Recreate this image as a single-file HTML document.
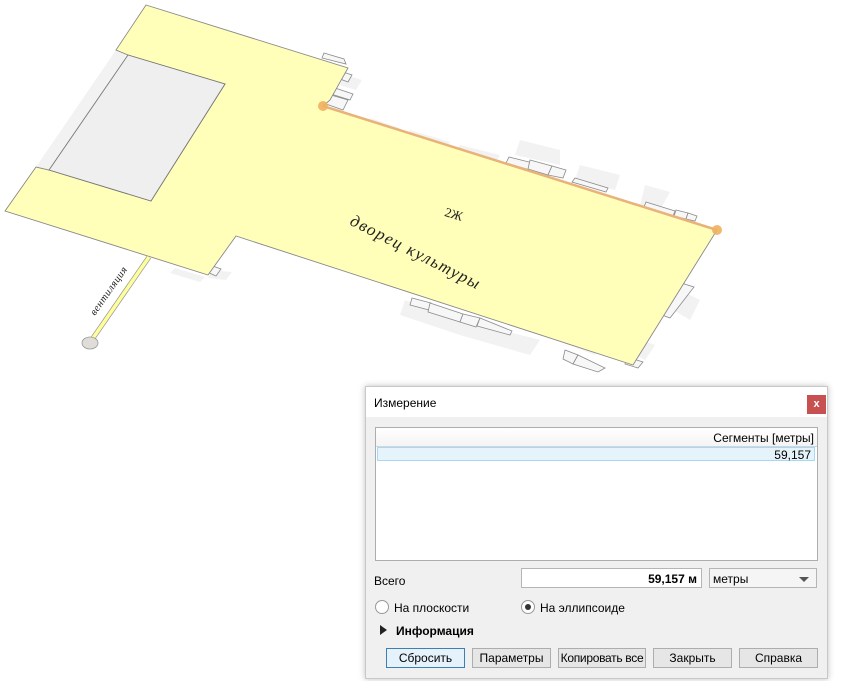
<!DOCTYPE html>
<html><head><meta charset="utf-8"><style>
html,body{margin:0;padding:0;width:842px;height:681px;overflow:hidden;background:#fff;font-family:"Liberation Sans",sans-serif;}
svg{position:absolute;left:0;top:0}
.dlg{position:absolute;left:365px;top:386px;width:461px;height:291px;background:#f0f0f0;border:1px solid #c8c8c8;box-shadow:0 0 6px rgba(0,0,0,.25);font-size:12px;color:#000}
.title{position:absolute;left:0;top:0;width:461px;height:30px;background:#fff}
.title span{position:absolute;left:8px;top:9px;font-size:12px}
.close{position:absolute;left:441px;top:8px;width:19px;height:19px;background:#c75050;color:#fff;font-weight:bold;font-size:11px;text-align:center;line-height:18px}
.tbl{position:absolute;left:9px;top:40px;width:441px;height:132px;background:#fff;border:1px solid #adadad}
.th{position:absolute;left:0;top:0;width:441px;height:18px;border-bottom:1px solid #d5d5d5;background:linear-gradient(#fff,#f4f4f4);text-align:right}
.th span{position:absolute;right:3px;top:3px}
.row{position:absolute;left:1px;top:19px;width:438px;height:14px;background:#e5f3fb;border:1px solid #a8d8f4;text-align:right;box-sizing:border-box}
.row span{position:absolute;right:3px;top:0px}
.lbl{position:absolute;white-space:nowrap}
.inp{position:absolute;left:155px;top:181px;width:181px;height:20px;background:#fff;border:1px solid #b5b5b5;font-weight:bold;text-align:right;box-sizing:border-box;padding:3px 4px 0 0}
.combo{position:absolute;left:343px;top:181px;width:108px;height:20px;background:#f5f5f5;border:1px solid #b5b5b5;box-sizing:border-box;padding:3px 0 0 3px}
.combo i{position:absolute;right:7px;top:8px;border-left:5px solid transparent;border-right:5px solid transparent;border-top:5px solid #555}
.rad{position:absolute;width:12px;height:12px;border:1px solid #999;border-radius:50%;background:#fff}
.rad.on::after{content:"";position:absolute;left:3px;top:3px;width:6px;height:6px;border-radius:50%;background:#333}
.btn{position:absolute;top:261px;height:20px;border:1px solid #adadad;background:#e6e6e6;text-align:center;line-height:19px;box-sizing:border-box;white-space:nowrap;overflow:hidden}
</style></head><body>
<svg width="842" height="681" viewBox="0 0 842 681">
<g fill="#f2f2f2">
<polygon points="116,50 128,55 49,170 36,167"/>
<polygon points="175,268 205,277 200,282 170,273"/>
<polygon points="212,270 232,272 226,280 208,278"/>
<polygon points="405,300 470,322 460,335 400,315"/>
<polygon points="470,322 540,340 530,355 460,335"/>
<polygon points="520,140 560,150 560,165 515,155"/>
<polygon points="580,165 620,175 615,190 575,180"/>
<polygon points="645,185 670,192 660,210 640,205"/>
<polygon points="670,285 700,300 690,320 665,305"/>
<polygon points="640,340 655,345 645,360 635,355"/>
<polygon points="560,330 600,345 595,355 555,340"/>
<polygon points="345,75 362,80 356,90 340,85"/>
<polygon points="340,110 370,120 368,128 336,118"/>
<polygon points="370,118 400,128 396,135 366,125"/>
<polygon points="410,130 450,142 446,148 406,137"/>
<polygon points="460,145 500,155 496,163 456,152"/>
</g>
<g fill="#f7f7f7" stroke="#8a8a8a" stroke-width="0.8">
<polygon points="324,53 344,59 346,64 322,58"/>
<polygon points="343,72 352,75 348,82 340,79"/>
<polygon points="335,88 353,94 350,100 331,94"/>
<polygon points="331,95 348,100 343,110 326,104"/>
<polygon points="210,265 221,269 216,276 207,272"/>
<polygon points="412,298 431,303 429,310 410,305"/>
<polygon points="430,303 463,314 460,322 428,312"/>
<polygon points="463,314 480,318 476,327 460,322"/>
<polygon points="480,318 512,331 510,335 477,326"/>
<polygon points="565,350 578,355 573,364 563,359"/>
<polygon points="578,355 605,368 598,372 573,364"/>
<polygon points="627,357 643,362 638,368 625,364"/>
<polygon points="678,282 694,287 670,318 662,315"/>
<polygon points="509,157 533,163 530,170 506,163"/>
<polygon points="530,160 552,166 548,175 528,169"/>
<polygon points="552,166 566,170 563,178 548,175"/>
<polygon points="575,178 608,188 606,192 572,182"/>
<polygon points="646,202 675,211 673,216 644,207"/>
<polygon points="676,210 688,213 686,219 674,216"/>
<polygon points="688,213 697,216 695,221 686,219"/>
</g>
<polygon points="146,5 348,68 330,100 323,106 717,230 633,365 236,236 208,275 5,211 36,167 49,170 151,201 225,84 128,55 116,50" fill="#ffffb9" stroke="#888" stroke-width="0.9"/>
<polygon points="128,55 225,84 151,201 49,170" fill="#efefef" stroke="#777" stroke-width="0.9"/>
<line x1="149" y1="257" x2="91" y2="341" stroke="#999" stroke-width="5"/>
<line x1="149" y1="257" x2="91" y2="341" stroke="#ffff99" stroke-width="3.5"/>
<ellipse cx="90" cy="343" rx="8" ry="6" fill="#e0ddd8" stroke="#999" stroke-width="0.8"/>
<line x1="323" y1="106" x2="717" y2="230" stroke="#e8b27a" stroke-width="2.5"/>
<circle cx="323" cy="106" r="5" fill="#f0b060" opacity="0.9"/>
<circle cx="717" cy="230" r="5" fill="#f0b060" opacity="0.9"/>
<text x="445" y="218" font-family="Liberation Serif,serif" font-size="13" transform="rotate(17 452 213)" fill="#222">2Ж</text>
<text x="352" y="225" font-family="Liberation Serif,serif" font-style="italic" font-size="17" letter-spacing="1.5" transform="rotate(27 352 218)" fill="#222">дворец  культуры</text>
<text x="95" y="316" font-family="Liberation Serif,serif" font-style="italic" font-size="10.5" letter-spacing="0.5" transform="rotate(-55 95 316)" fill="#222">вентиляция</text>
</svg>
<div class="dlg">
<div class="title"><span>Измерение</span><div class="close">x</div></div>
<div class="tbl"><div class="th"><span>Сегменты [метры]</span></div><div class="row"><span>59,157</span></div></div>
<div class="lbl" style="left:8px;top:187px">Всего</div>
<div class="inp">59,157 м</div>
<div class="combo">метры<i></i></div>
<div class="rad" style="left:9px;top:213px"></div><div class="lbl" style="left:28px;top:214px">На плоскости</div>
<div class="rad on" style="left:155px;top:213px"></div><div class="lbl" style="left:174px;top:214px">На эллипсоиде</div>
<div class="lbl" style="left:14px;top:238px;width:0;height:0;border-top:5px solid transparent;border-bottom:5px solid transparent;border-left:7px solid #222"></div>
<div class="lbl" style="left:30px;top:237px;font-weight:bold">Информация</div>
<div class="btn" style="left:20px;width:79px;border-color:#3c7fb1;background:#e5f1fb">Сбросить</div>
<div class="btn" style="left:106px;width:79px">Параметры</div>
<div class="btn" style="left:192px;width:88px;letter-spacing:-0.3px">Копировать все</div>
<div class="btn" style="left:287px;width:79px">Закрыть</div>
<div class="btn" style="left:373px;width:79px">Справка</div>
</div>
</body></html>
